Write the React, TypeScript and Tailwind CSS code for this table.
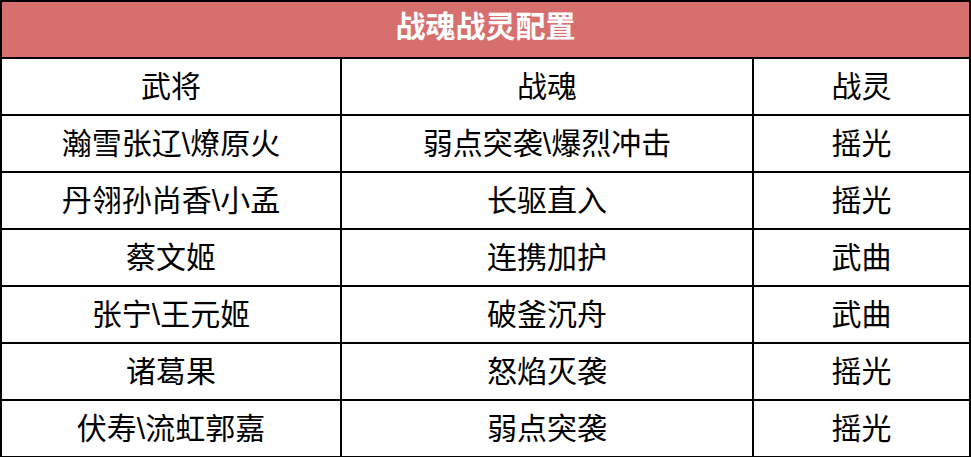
const ROWS: [string, string, string][] = [
  ["瀚雪张辽\\燎原火", "弱点突袭\\爆烈冲击", "摇光"],
  ["丹翎孙尚香\\小孟", "长驱直入", "摇光"],
  ["蔡文姬", "连携加护", "武曲"],
  ["张宁\\王元姬", "破釜沉舟", "武曲"],
  ["诸葛果", "怒焰灭袭", "摇光"],
  ["伏寿\\流虹郭嘉", "弱点突袭", "摇光"],
];

export default function App() {
  return (
    <div className="w-[971px] h-[457px] bg-white font-['Liberation_Sans','Noto_Sans_CJK_SC',sans-serif]">
      <table className="w-full border-collapse border-2 border-black table-fixed">
        <colgroup>
          <col className="w-[340px]" />
          <col className="w-[412px]" />
          <col />
        </colgroup>
        <thead>
          <tr className="h-[57px]">
            <th
              colSpan={3}
              className="bg-[#d86f6f] text-white text-[30px] font-bold leading-none border-2 border-black pb-[6px]"
            >
              战魂战灵配置
            </th>
          </tr>
          <tr className="h-[57px]">
            {["武将", "战魂", "战灵"].map((h) => (
              <th key={h} className="border-2 border-black text-[30px] font-normal text-black leading-none">
                {h}
              </th>
            ))}
          </tr>
        </thead>
        <tbody>
          {ROWS.map((r, i) => (
            <tr key={i} className="h-[57px]">
              {r.map((c, j) => (
                <td key={j} className="border-2 border-black text-center text-[30px] text-black leading-none">
                  {c}
                </td>
              ))}
            </tr>
          ))}
        </tbody>
      </table>
    </div>
  );
}
